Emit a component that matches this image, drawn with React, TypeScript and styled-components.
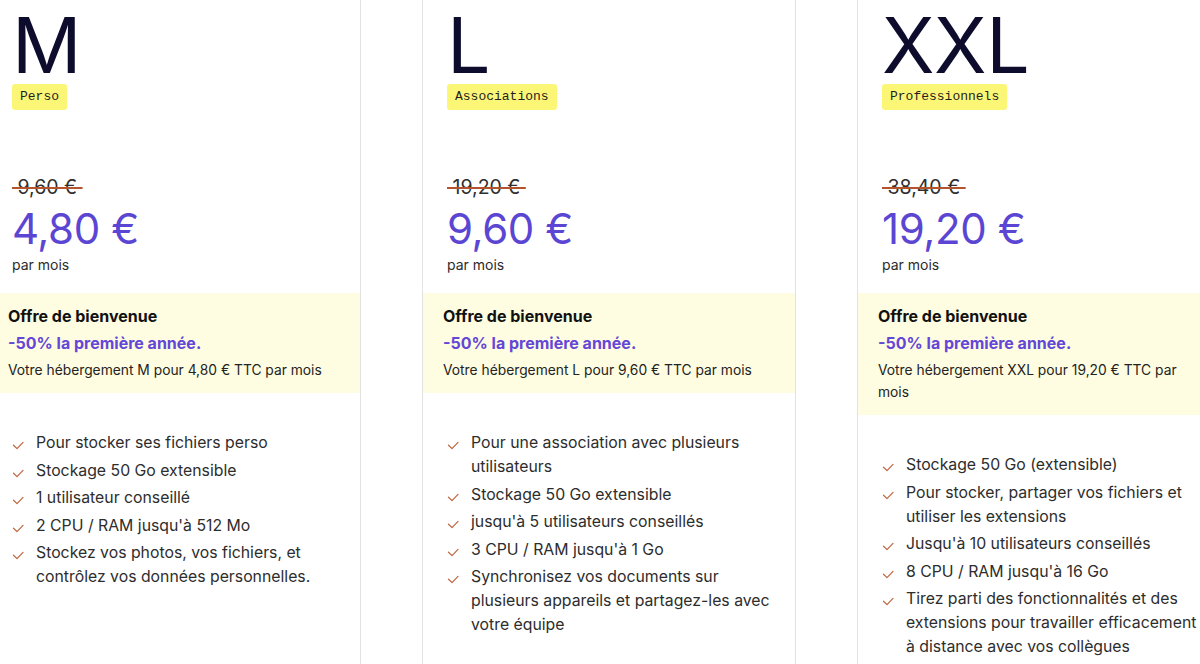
import React from 'react'
import styled, { createGlobalStyle } from 'styled-components'

const GlobalStyle = createGlobalStyle`
  html, body {
    margin: 0;
    padding: 0;
    background: #ffffff;
  }
  body {
    font-family: Inter, 'Noto Sans', 'Liberation Sans', sans-serif;
    color: #2b2b2b;
  }
`

const Viewport = styled.div`
  width: 1200px;
  height: 664px;
  overflow: hidden;
  background: #fff;
`

const CardRow = styled.div`
  display: flex;
  gap: 61px;
  margin-left: -13px;
  height: 100%;
`

const Card = styled.div`
  flex: 0 0 374px;
  box-sizing: border-box;
  display: flex;
  flex-direction: column;
  border-left: 1px solid #e2e2e2;
  border-right: 1px solid #e2e2e2;
`

const Header = styled.div`
  display: flex;
  flex-direction: column;
  align-items: flex-start;
  padding: 1px 24px 0;
`

const PlanName = styled.div`
  font-size: 77px;
  line-height: 88px;
  font-weight: 400;
  color: #0d0c2c;
  letter-spacing: -0.4px;
`

const Tag = styled.span`
  margin-top: -5px;
  height: 26px;
  line-height: 26px;
  padding: 0 8px;
  border-radius: 3px;
  background: #fcf677;
  font-family: 'Liberation Mono', 'DejaVu Sans Mono', monospace;
  font-size: 13px;
  color: #1f1f1f;
`

const Pricing = styled.div`
  margin-top: 63px;
  display: flex;
  flex-direction: column;
  align-items: flex-start;
`

const OldPrice = styled.s`
  font-size: 19.5px;
  line-height: 28px;
  color: #2f2f2f;
  text-decoration: line-through;
  text-decoration-color: #b4532c;
  text-decoration-thickness: 1.5px;
`

const Price = styled.div`
  margin-top: 4px;
  font-size: 42px;
  line-height: 48px;
  color: #5b46d4;
  letter-spacing: -0.4px;
`

const Period = styled.div`
  margin-top: 2px;
  font-size: 14px;
  line-height: 20px;
  color: #2b2b2b;
`

const Offer = styled.div`
  margin-top: 18px;
  padding: 10px 20px 12px;
  background: #fefde1;
`

const OfferTitle = styled.div<{ $accent?: boolean }>`
  font-size: 16px;
  line-height: 27px;
  font-weight: 700;
  color: ${({ $accent }) => ($accent ? '#6447d6' : '#111111')};
`

const OfferText = styled.div`
  margin-top: 2px;
  font-size: 13.8px;
  line-height: 22px;
  color: #232323;
`

const Features = styled.ul`
  margin: 38px 0 0;
  padding: 0 24px;
  list-style: none;
`

const Feature = styled.li`
  display: flex;
  gap: 12px;
  margin-bottom: 3.5px;
  font-size: 15.8px;
  line-height: 24px;
  color: #2d2d2d;
`

const CheckIcon = styled.svg`
  flex-shrink: 0;
  margin-top: 10px;
`

function Check() {
  return (
    <CheckIcon width="12" height="9" viewBox="0 0 12 9" fill="none">
      <polyline points="1.5,4.2 5,7.6 11,1.4" stroke="#c06a45" strokeWidth="1.3" strokeLinecap="round" strokeLinejoin="round" />
    </CheckIcon>
  )
}

interface Plan {
  name: string
  tag: string
  oldPrice: string
  price: string
  features: string[]
}

const plans: Plan[] = [
  {
    name: 'M',
    tag: 'Perso',
    oldPrice: '9,60 €',
    price: '4,80 €',
    features: [
      'Pour stocker ses fichiers perso',
      'Stockage 50 Go extensible',
      '1 utilisateur conseillé',
      "2 CPU / RAM jusqu'à 512 Mo",
      'Stockez vos photos, vos fichiers, et contrôlez vos données personnelles.',
    ],
  },
  {
    name: 'L',
    tag: 'Associations',
    oldPrice: '19,20 €',
    price: '9,60 €',
    features: [
      'Pour une association avec plusieurs utilisateurs',
      'Stockage 50 Go extensible',
      "jusqu'à 5 utilisateurs conseillés",
      "3 CPU / RAM jusqu'à 1 Go",
      'Synchronisez vos documents sur plusieurs appareils et partagez-les avec votre équipe',
    ],
  },
  {
    name: 'XXL',
    tag: 'Professionnels',
    oldPrice: '38,40 €',
    price: '19,20 €',
    features: [
      'Stockage 50 Go (extensible)',
      'Pour stocker, partager vos fichiers et utiliser les extensions',
      "Jusqu'à 10 utilisateurs conseillés",
      "8 CPU / RAM jusqu'à 16 Go",
      'Tirez parti des fonctionnalités et des extensions pour travailler efficacement à distance avec vos collègues',
    ],
  },
]

function PlanCard({ plan }: { plan: Plan }) {
  return (
    <Card>
      <Header>
        <PlanName>{plan.name}</PlanName>
        <Tag>{plan.tag}</Tag>
        <Pricing>
          <OldPrice>{'\u00a0' + plan.oldPrice + '\u00a0'}</OldPrice>
          <Price>{plan.price}</Price>
          <Period>par mois</Period>
        </Pricing>
      </Header>
      <Offer>
        <OfferTitle>Offre de bienvenue</OfferTitle>
        <OfferTitle $accent>-50% la première année.</OfferTitle>
        <OfferText>
          Votre hébergement {plan.name} pour {plan.price} TTC par mois
        </OfferText>
      </Offer>
      <Features>
        {plan.features.map((f, i) => (
          <Feature key={i}>
            <Check />
            <span>{f}</span>
          </Feature>
        ))}
      </Features>
    </Card>
  )
}

export default function App() {
  return (
    <>
      <GlobalStyle />
      <Viewport>
        <CardRow>
          {plans.map((p) => (
            <PlanCard key={p.name} plan={p} />
          ))}
        </CardRow>
      </Viewport>
    </>
  )
}
